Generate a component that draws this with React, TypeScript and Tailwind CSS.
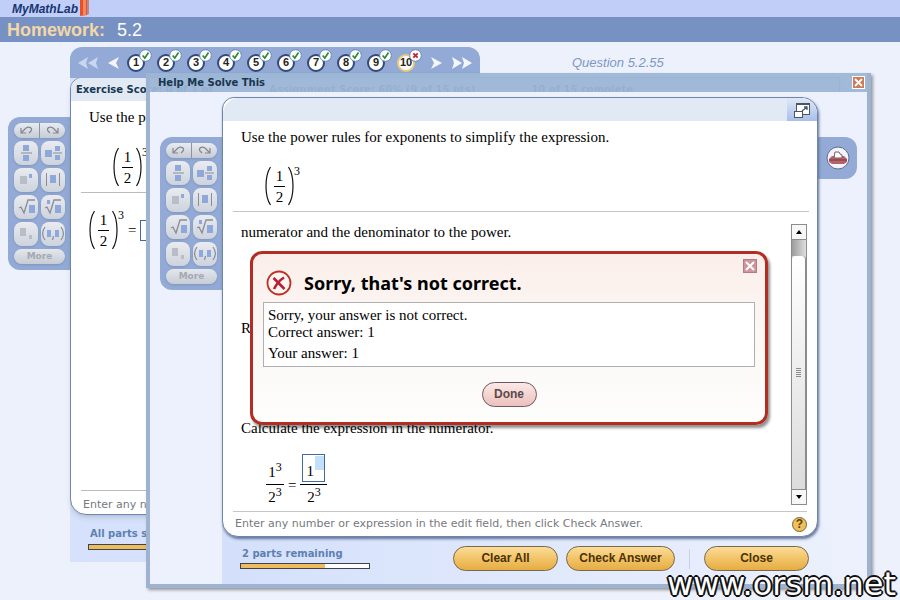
import React from 'react';

const SERIF = "font-['Liberation_Serif','Times_New_Roman',serif]";
const SANS = "font-['Liberation_Sans',Arial,sans-serif]";
const VERDANA = "font-['DejaVu_Sans',Verdana,sans-serif]";

const questions = [1, 2, 3, 4, 5, 6, 7, 8, 9, 10];

const Paren: React.FC<{ flip?: boolean }> = ({ flip }) => (
  <svg width="6" height="42" viewBox="0 0 6 42" fill="none" stroke="#111" strokeWidth="1.2">
    <path d={flip ? 'M0.500 2C6.500 11 6.500 31 0.500 40' : 'M5.500 2C-0.500 11 -0.500 31 5.500 40'} />
  </svg>
);

// (1/2)^3
const HalfCubed = () => (
  <span className="flex h-[42px] items-center text-[15px] leading-5">
    <Paren />
    <span className="mx-[3px] flex w-[11px] flex-col items-center">
      <span>1</span>
      <span className="w-full border-t border-black" />
      <span>2</span>
    </span>
    <Paren flip />
    <span className="self-start text-xs leading-3">3</span>
  </span>
);

interface PadKey {
  label: string;
  art: React.ReactNode;
}

const BLUE = '#8fa8dc';
const GRAY = '#b9bec6';
const LINE = '#8b8d93';

const padKeys: PadKey[] = [
  {
    label: 'Fraction',
    art: <><rect x="9" y="4" width="6" height="6" fill={BLUE} /><path d="M7 12H18" stroke={LINE} /><rect x="9" y="14" width="6" height="6" fill={BLUE} /></>,
  },
  {
    label: 'Mixed number',
    art: <><rect x="4" y="9" width="7" height="7" fill={BLUE} /><rect x="14" y="5" width="5" height="5" fill={BLUE} /><path d="M12 12H21" stroke={LINE} /><rect x="14" y="14" width="5" height="5" fill={BLUE} /></>,
  },
  {
    label: 'Exponent',
    art: <><rect x="6" y="8" width="7" height="8" fill={GRAY} /><rect x="15" y="6" width="3" height="4" fill={BLUE} /></>,
  },
  {
    label: 'Absolute value',
    art: <><path d="M5.500 5V18M18.500 5V18" stroke={LINE} /><rect x="9" y="7" width="6" height="8" fill={BLUE} /></>,
  },
  {
    label: 'Square root',
    art: <><path d="M5 13L7 12L10 18L14 5H21" stroke={LINE} strokeWidth="1.3" fill="none" /><rect x="15" y="10" width="6" height="8" fill={BLUE} /></>,
  },
  {
    label: 'Nth root',
    art: <><path d="M4 13L6 12L9 18L13 5H20" stroke={LINE} strokeWidth="1.3" fill="none" /><rect x="14" y="10" width="6" height="8" fill={BLUE} /><rect x="6" y="5" width="3" height="4" fill={BLUE} /></>,
  },
  {
    label: 'Subscript',
    art: <><rect x="6" y="6" width="6" height="8" fill={GRAY} /><rect x="15" y="13" width="3" height="4" fill={GRAY} /></>,
  },
  {
    label: 'Ordered pair',
    art: <><path d="M4 5C1 9 1 14 4 18M20 5C23 9 23 14 20 18M12.500 14L11.500 18" stroke={LINE} strokeWidth="1.2" fill="none" /><rect x="6" y="8" width="4" height="7" fill={BLUE} /><rect x="14" y="8" width="4" height="7" fill={BLUE} /></>,
  },
];

const MathPad = () => (
  <div className="flex w-[62px] shrink-0 flex-col gap-[3px] rounded-l-xl bg-[#92aad5] py-1.5 pr-[5px] pl-1.5">
    <div className="flex h-[15px] overflow-hidden rounded-lg bg-linear-to-b from-[#e9ebef] to-[#c6ccd6] shadow-sm">
      <button aria-label="Undo" className="flex flex-1 items-center justify-center border-r border-[#8c94a4]">
        <svg width="13" height="9" viewBox="0 0 13 9" fill="none" stroke="#85878d" strokeWidth="1.2">
          <path d="M1 2V7H6M1 7L6 2M6 2C9 0 13 2 11 5L9 7" />
        </svg>
      </button>
      <button aria-label="Redo" className="flex flex-1 items-center justify-center">
        <svg width="13" height="9" viewBox="0 0 13 9" fill="none" stroke="#85878d" strokeWidth="1.2">
          <path d="M12 2V7H7M12 7L7 2M7 2C4 0 0 2 2 5L4 7" />
        </svg>
      </button>
    </div>
    <div className="grid grid-cols-2 gap-[3px]">
      {padKeys.map((key) => (
        <button
          key={key.label}
          aria-label={key.label}
          className="flex h-6 items-center justify-center rounded-lg bg-linear-to-b from-[#e9ebef] to-[#cdd3dd] shadow-sm"
        >
          <svg width="24" height="24" viewBox="0 0 24 24">{key.art}</svg>
        </button>
      ))}
    </div>
    <button className={`${VERDANA} h-[15px] rounded-lg bg-linear-to-b from-[#e4e7ec] to-[#c6ccd6] text-[9px] leading-[15px] font-bold text-[#a5a9b2] shadow-sm`}>
      More
    </button>
  </div>
);

const GoldButton: React.FC<{ children: React.ReactNode; className?: string }> = ({ children, className = '' }) => (
  <button
    className={`${SANS} h-[25px] rounded-full border border-[#76694d] bg-linear-to-b from-[#fbdc98] via-[#f2c468] to-[#e6ac42] pb-0.5 text-xs font-bold text-[#4b3205] ${className}`}
  >
    {children}
  </button>
);

const ProgressBar: React.FC<{ value: number; label: string }> = ({ value, label }) => (
  <div role="progressbar" aria-label={label} aria-valuenow={value} className="h-1.5 w-[130px] border border-[#3f434c] bg-white">
    <div className="h-full bg-[#eebc5c]" style={{ width: `${value}%` }} />
  </div>
);

const QuestionNav = () => (
  <nav className="flex h-[31px] w-[410px] items-center rounded-t-xl bg-[#92aad5] pl-2">
    <button aria-label="First question" className="mr-2.5">
      <svg width="20" height="12" viewBox="0 0 20 12" fill="#c9d6f0">
        <path d="M10 0L0 6L10 12L8 6ZM20 0L10 6L20 12L18 6Z" />
      </svg>
    </button>
    <button aria-label="Previous question" className="mr-2">
      <svg width="11" height="12" viewBox="0 0 11 12" fill="#f4f7ff">
        <path d="M11 0L0 6L11 12L8 6Z" />
      </svg>
    </button>
    {questions.map((n) => {
      const current = n === 10;
      return (
        <a
          key={n}
          href={`#question-${n}`}
          className={`${SANS} relative mr-3 flex size-[18px] shrink-0 items-center justify-center rounded-full border-2 bg-white text-[11px] font-bold text-[#222] ${
            current ? 'border-[#ecca7c]' : 'border-[#33497b]'
          }`}
        >
          {n}
          <svg className="absolute -top-[7px] -right-[9px]" width="13" height="13" viewBox="0 0 13 13" fill="none">
            <circle cx="6.500" cy="6.500" r="5.800" fill="#fff" stroke="#6f86b5" />
            {current ? (
              <path d="M4.300 4.300L8.700 8.700M8.700 4.300L4.300 8.700" stroke="#c2252b" strokeWidth="1.800" />
            ) : (
              <path d="M3.600 6.500L5.800 9L9.500 3.600" stroke="#2c8d35" strokeWidth="1.700" />
            )}
          </svg>
        </a>
      );
    })}
    <button aria-label="Next question" className="ml-1 mr-2.5">
      <svg width="11" height="12" viewBox="0 0 11 12" fill="#f4f7ff">
        <path d="M0 0L11 6L0 12L3 6Z" />
      </svg>
    </button>
    <button aria-label="Last question">
      <svg width="20" height="12" viewBox="0 0 20 12" fill="#f4f7ff">
        <path d="M0 0L10 6L0 12L2 6ZM10 0L20 6L10 12L12 6Z" />
      </svg>
    </button>
  </nav>
);

const Exercise = () => (
  <main className="flex pt-[5px] pr-[60px] pl-2">
    <div className="pt-[70px]">
      <MathPad />
    </div>
    <div className="min-w-0 flex-1">
      <div className="flex items-center">
        <QuestionNav />
        <span className={`${SANS} ml-[92px] text-[13px] whitespace-nowrap text-[#7d97c4] italic`}>Question 5.2.55</span>
      </div>
      <div className="bg-[#d6e2fb]">
        <div className={`-mt-px flex min-h-[438px] flex-col overflow-hidden rounded-tl-xl rounded-b-2xl border border-[#6f86b0] bg-white shadow-md ${SERIF}`}>
          <div className={`${VERDANA} flex h-[23px] items-center gap-14 bg-[#e1e9f4] pl-[5px] text-[10px] font-bold whitespace-nowrap text-[#17364f]`}>
            <span>Exercise Score: 0 of 1 pt</span>
            <span>Assignment Score: 60% (9 of 15 pts)</span>
            <span>10 of 15 complete</span>
          </div>
          <p className="pt-1.5 pl-[18px] text-[15px] leading-5">Use the power rules for exponents to simplify the expression.</p>
          <div className="mt-[19px] pl-[42px]">
            <HalfCubed />
          </div>
          <hr className="mt-1 ml-2.5 border-[#b9bcc2]" />
          <div className="mt-4 flex items-center gap-1 pl-[18px]">
            <HalfCubed />
            <span className="text-[15px]">=</span>
            <input aria-label="Answer" className="h-[21px] w-4 border border-[#43689c]" />
          </div>
          <div className={`${VERDANA} mt-auto ml-2.5 border-t border-[#b9bcc2] pt-1.5 pb-px pl-0.5 text-[11px] leading-4 text-[#77797d]`}>
            Enter any number
          </div>
        </div>
        <div className="flex flex-col gap-1 pt-[13px] pb-3 pl-[18px]">
          <span className={`${VERDANA} pl-0.5 text-[10px] leading-3 font-bold text-[#5f80b2]`}>All parts showing</span>
          <ProgressBar label="Exercise progress" value={100} />
        </div>
      </div>
    </div>
  </main>
);

const Scrollbar = () => (
  <div className="mr-[10px] mb-1.5 flex w-4 flex-col border border-[#8a8c90] bg-[#d4d4d4]">
    <button aria-label="Scroll up" className="flex h-[15px] items-center justify-center border-b border-[#8a8c90] bg-[#f7f7f7]">
      <svg width="6" height="4" viewBox="0 0 6 4"><path d="M3 0L6 4H0Z" /></svg>
    </button>
    <div className="h-4 bg-linear-to-r from-[#9c9c9c] to-[#dedede]" />
    <div className="flex flex-1 flex-col items-center justify-center gap-px rounded-t-sm border-r border-[#8a8c90] bg-linear-to-b from-white to-[#dcdcdc]">
      {[0, 1, 2, 3, 4].map((i) => (
        <span key={i} className="h-px w-[5px] bg-[#8a8c90]" />
      ))}
    </div>
    <button aria-label="Scroll down" className="flex h-[15px] items-center justify-center border-t border-[#8a8c90] bg-[#f7f7f7]">
      <svg width="6" height="4" viewBox="0 0 6 4"><path d="M3 4L6 0H0Z" /></svg>
    </button>
  </div>
);

const ErrorPopup = () => (
  <section
    role="alertdialog"
    aria-labelledby="error-title"
    className="absolute top-[153px] right-[49px] left-[27px] rounded-xl border-3 border-[#b42d22] bg-linear-to-b from-[#fbeeea] via-[#fbf8f5] to-[#fdfdfb] px-2.5 pb-[15px] shadow-[2px_3px_3px_#00000070]"
  >
    <div className="flex h-12 items-start pt-4 pl-[3px]">
      <svg width="26" height="26" viewBox="0 0 26 26" fill="none">
        <circle cx="13" cy="13" r="11.500" stroke="#bd3024" strokeWidth="1.800" fill="#fff6f3" />
        <path d="M7.500 8L18.500 19M18 7.500C14 10 10 15 8 19" stroke="#b82033" strokeWidth="2.600" />
      </svg>
      <h2 id="error-title" className="ml-3 font-['Noto_Sans',Tahoma,sans-serif] text-lg leading-[26px] font-bold text-black">
        Sorry, that's not correct.
      </h2>
      <button aria-label="Close message" className="-mt-[11px] -mr-[2px] ml-auto flex size-3.5 items-center justify-center border border-[#b77984] bg-[#cf959d]">
        <svg width="10" height="10" viewBox="0 0 10 10" stroke="#fff" strokeWidth="2"><path d="M1 1L9 9M9 1L1 9" /></svg>
      </button>
    </div>
    <div className="h-[65px] border border-[#b0b0b0] bg-white px-1 pt-1 text-[15px] leading-[17px]">
      <p>Sorry, your answer is not correct.</p>
      <p>Correct answer: 1</p>
      <p className="mt-1">Your answer: 1</p>
    </div>
    <div className="mt-[15px] flex justify-center">
      <button className={`${SANS} h-[25px] w-[55px] rounded-full border border-[#6d5a5a] bg-linear-to-b from-[#fbe9e7] to-[#ecc0bd] pb-0.5 text-xs font-bold text-[#5b4a4a]`}>
        Done
      </button>
    </div>
  </section>
);

const HelpPanel = () => (
  <div className={`relative z-10 flex min-w-0 flex-1 flex-col rounded-tr-2xl rounded-tl-xl rounded-b-2xl border border-[#6f86a8] bg-white text-black shadow-[1px_2px_3px_#5f7299] ${SERIF}`}>
    <div className="flex h-[23px] justify-end rounded-t-2xl bg-[#e1e9f4]">
      <button aria-label="Expand panel" className="flex w-[30px] items-center justify-center rounded-tr-2xl bg-linear-to-b from-[#dfe8f8] to-[#a9bfe8]">
        <svg width="16" height="16" viewBox="0 0 16 16" fill="#fff" stroke="#4c5563">
          <rect x="2.500" y="1.500" width="13" height="11" />
          <path d="M2 2H16" strokeWidth="2" />
          <rect x="0.500" y="9.500" width="8" height="6" />
          <path d="M8 9L13 5M10 5H13V8" fill="none" strokeWidth="1.300" />
        </svg>
      </button>
    </div>
    <p className="pt-1.5 pl-[18px] text-[15px] leading-5">Use the power rules for exponents to simplify the expression.</p>
    <div className="mt-[18px] pl-[42px]">
      <HalfCubed />
    </div>
    <hr className="mt-1 mr-2 ml-2.5 border-[#c4c6ca]" />
    <div className="flex pt-3">
      <div className="-mt-0.5 flex-1 pb-0.5 pl-[18px] text-[15px] leading-5">
        <p>numerator and the denominator to the power.</p>
        <p className="mt-[76px]">R</p>
        <p className="mt-20">Calculate the expression in the numerator.</p>
        <div className="mt-4 flex items-center gap-1 pl-[25px]">
          <span className="flex flex-col items-center pt-1.5">
            <span className="leading-6">1<sup className="text-xs">3</sup></span>
            <span className="w-[18px] border-t border-black" />
            <span className="leading-6">2<sup className="text-xs">3</sup></span>
          </span>
          <span className="pt-1.5">=</span>
          <span className="flex flex-col items-center">
            <span className="mb-0.5 flex h-7 w-[23px] items-end border border-[#43689c] pl-[3px]">
              <input aria-label="Numerator" defaultValue="1" className="w-2 leading-5 outline-none" />
              <span className="mb-auto ml-px mt-px h-3.5 w-[9px] bg-[#c3e0fb]" />
            </span>
            <span className="w-[27px] border-t border-black" />
            <span className="leading-6">2<sup className="text-xs">3</sup></span>
          </span>
        </div>
      </div>
      <Scrollbar />
    </div>
    <div className={`${VERDANA} mr-2.5 ml-2.5 flex items-center justify-between border-t border-[#c4c6ca] pt-1 pb-1 pl-0.5 text-[11px] leading-4 text-[#77797d]`}>
      <span>Enter any number or expression in the edit field, then click Check Answer.</span>
      <button aria-label="Help" className={`${SANS} flex size-[15px] items-center justify-center rounded-full border border-[#7c6330] bg-[#f0bf5e] text-xs font-bold text-[#5e430b]`}>
        ?
      </button>
    </div>
    <ErrorPopup />
  </div>
);

const HelpWindow = () => (
  <section aria-label="Help Me Solve This" className="absolute top-[73px] right-[29px] left-[146px] border-x-4 border-b-4 border-[#9db3d0] shadow-[2px_2px_3px_#00000060]">
    <header className="flex h-[19px] items-center justify-between bg-[#9db6d6]/95 pr-[2px] pl-2">
      <h1 className={`${VERDANA} text-[10px] font-bold text-[#17364f]`}>Help Me Solve This</h1>
      <button aria-label="Close window" className="flex size-[13px] items-center justify-center border border-white bg-[#cf7b55]">
        <svg width="9" height="9" viewBox="0 0 9 9" stroke="#fff" strokeWidth="1.800"><path d="M1 1L8 8M8 1L1 8" /></svg>
      </button>
    </header>
    <div className="bg-[#edf1fd] pt-[5px]">
      <div className="flex items-start">
        <div className="pt-10 pl-2.5">
          <MathPad />
        </div>
        <HelpPanel />
        <div className="w-[49px] pt-10">
          <button aria-label="Print" className="flex h-[42px] w-[39px] items-center justify-center rounded-r-xl bg-[#92aad5]">
            <svg width="24" height="24" viewBox="0 0 24 24">
              <circle cx="12" cy="12" r="11" fill="#f3f4fa" stroke="#5d6c90" />
              <path d="M3 13L6 10H18L21 13V16L18 18H6L3 16Z" fill="#b5626b" />
              <path d="M8 12L9 6H13L14 8L16 9V12Z" fill="#fff" stroke="#7b5a62" />
              <path d="M3 14H21" stroke="#7d3640" />
            </svg>
          </button>
        </div>
      </div>
      <footer className="-mt-4 ml-[72px] flex items-start bg-linear-to-r from-[#d4e0fb] to-[#edf1fd] pt-[25px] pr-[58px] pb-[13px] pl-[18px]">
        <div className="flex flex-col gap-[3px] pt-px">
          <span className={`${VERDANA} pl-0.5 text-[10px] leading-[13px] font-bold text-[#5f80b2]`}>2 parts remaining</span>
          <ProgressBar label="Parts completed" value={66} />
        </div>
        <div className="ml-auto flex items-center gap-2">
          <GoldButton className="w-[105px]">Clear All</GoldButton>
          <GoldButton className="w-[109px]">Check Answer</GoldButton>
          <span className="mx-1.5 h-5 w-px bg-[#c7d2ea]" />
          <GoldButton className="w-[105px]">Close</GoldButton>
        </div>
      </footer>
    </div>
  </section>
);

export default function App() {
  return (
    <div className="relative min-h-screen overflow-hidden bg-[#edf1fc]">
      <div className="flex h-[17px] items-center bg-[#c1cef8] pl-3">
        <span className={`${SANS} text-xs leading-4 font-bold text-[#17356f] italic`}>MyMathLab</span>
        <svg className="ml-0.5" width="10" height="17" viewBox="0 0 10 17">
          <path d="M0 0H7V15L0 16Z" fill="#e8502c" />
          <path d="M3 0H6V15L3 15Z" fill="#f58a58" />
          <path d="M7 0H9V14L7 15Z" fill="#b78a90" />
        </svg>
      </div>
      <div className={`${SANS} flex h-[25px] items-center gap-3 bg-[#7891c3] pl-[7px] text-lg`}>
        <span className="font-bold text-[#f3d7a4]">Homework:</span>
        <span className="text-white">5.2</span>
      </div>
      <Exercise />
      <HelpWindow />
      <span className="absolute right-1 bottom-0 font-['DejaVu_Sans',sans-serif] text-[32px] leading-8 text-white [text-shadow:1px_1px_0_#111,-1px_-1px_0_#111,1px_-1px_0_#111,-1px_1px_0_#111,2px_0_0_#111,-2px_0_0_#111,0_2px_0_#111,0_-2px_0_#111]">
        www.orsm.net
      </span>
    </div>
  );
}
